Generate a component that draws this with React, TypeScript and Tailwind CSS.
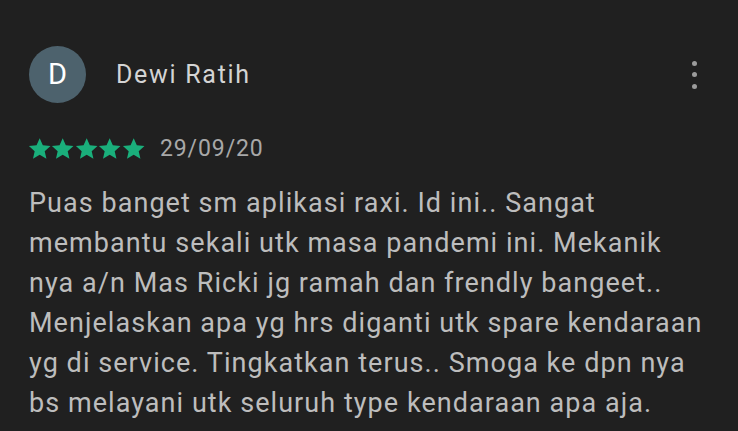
import { useState } from "react";

const lines = [
  "Puas banget sm aplikasi raxi. Id ini.. Sangat",
  "membantu sekali utk masa pandemi ini. Mekanik",
  "nya a/n Mas Ricki jg ramah dan frendly bangeet..",
  "Menjelaskan apa yg hrs diganti utk spare kendaraan",
  "yg di service. Tingkatkan terus.. Smoga ke dpn nya",
  "bs melayani utk seluruh type kendaraan apa aja.",
];

function Star() {
  return (
    <svg viewBox="1 1 22 22" className="w-[23.4px] h-[23.4px]" fill="#1aaf7b">
      <path d="M12 2.2l2.95 6.6 7.2.7-5.43 4.8 1.6 7.06L12 17.7l-6.32 3.66 1.6-7.06L1.85 9.5l7.2-.7z" />
    </svg>
  );
}

export default function App() {
  const [rating] = useState(5);

  return (
    <div
      className="w-[738px] h-[431px] overflow-hidden bg-[#202020] pl-[29px] pr-[40px] pt-[46px]"
      style={{ fontFamily: "Roboto, 'Noto Sans', sans-serif" }}
    >
      <div className="flex items-center">
        <div className="w-[57px] h-[57px] rounded-full bg-[#4d626d] flex items-center justify-center text-[29px] text-white">
          D
        </div>
        <div className="ml-[30px] text-[25px] tracking-[1.7px] text-[#d4d4d4]">Dewi Ratih</div>
        <button className="ml-auto flex flex-col items-center gap-[6.5px] mr-[1px]" aria-label="More">
          <span className="w-[5px] h-[5px] rounded-full bg-[#9c9c9c]" />
          <span className="w-[5px] h-[5px] rounded-full bg-[#9c9c9c]" />
          <span className="w-[5px] h-[5px] rounded-full bg-[#9c9c9c]" />
        </button>
      </div>

      <div className="flex items-center mt-[34px] h-[24px]">
        <div className="flex -ml-[1px]">
          {Array.from({ length: rating }).map((_, i) => (
            <Star key={i} />
          ))}
        </div>
        <span className="ml-[15px] text-[23px] tracking-[0.9px] text-[#a8a8a8]">29/09/20</span>
      </div>

      <div className="mt-[22px] text-[27px] leading-[40px] tracking-[1.05px] text-[#bdbdbd]">
        {lines.map((l) => (
          <div key={l} className="whitespace-nowrap">
            {l}
          </div>
        ))}
      </div>
    </div>
  );
}
